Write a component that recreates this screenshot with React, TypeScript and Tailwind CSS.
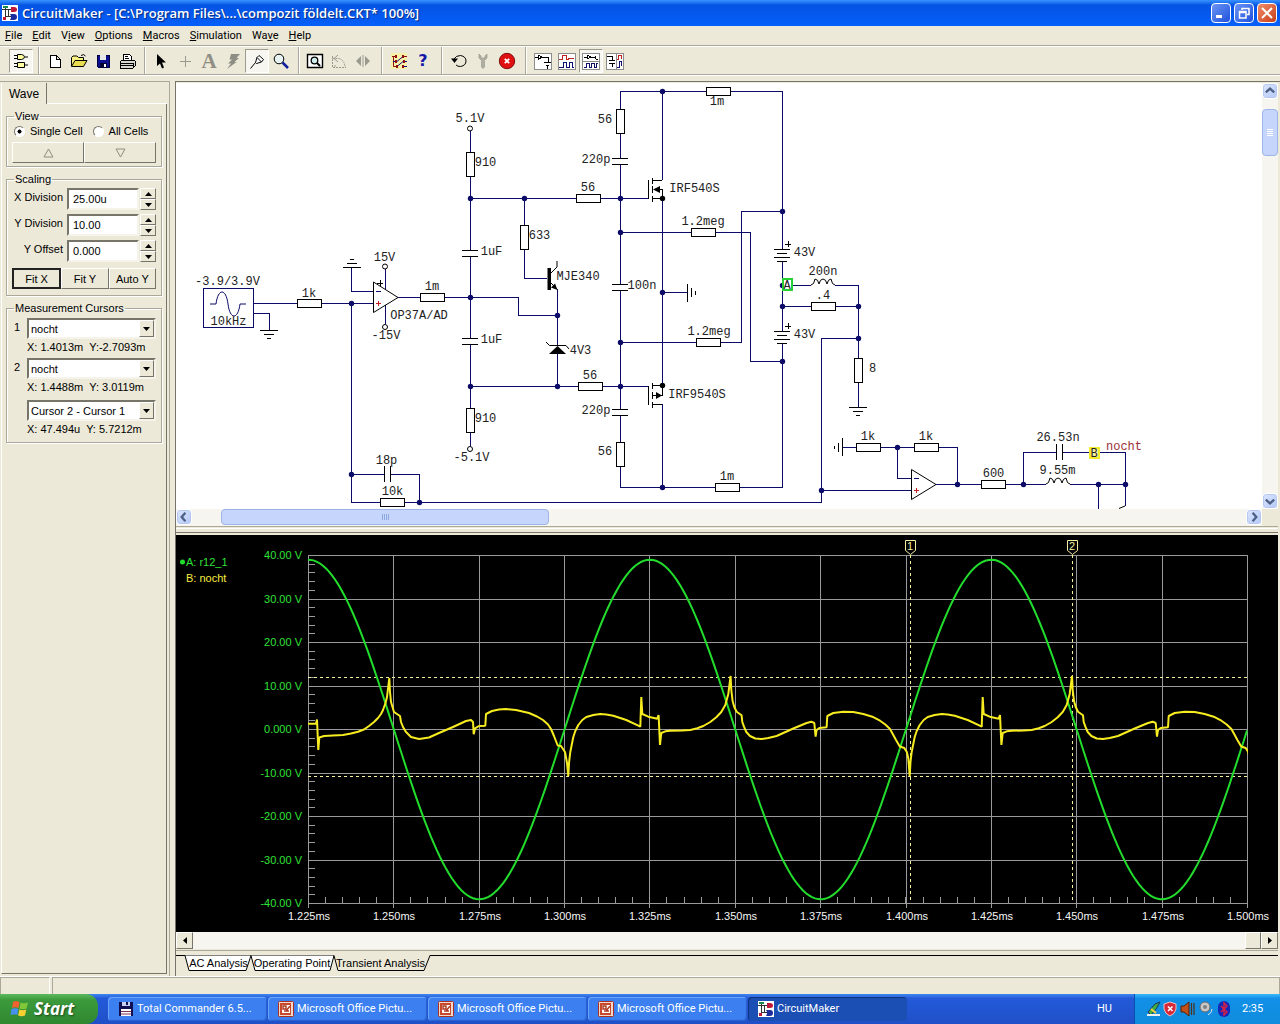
import React from "react";

/* ---------- data ---------- */

const menus: [string, string, string][] = [
  ["", "F", "ile"],
  ["", "E", "dit"],
  ["V", "i", "ew"],
  ["", "O", "ptions"],
  ["", "M", "acros"],
  ["", "S", "imulation"],
  ["Wa", "v", "e"],
  ["", "H", "elp"],
];

const labels: [number, number, string][] = [
  [196, 285, "-3.9/3.9V"], [211, 325, "10kHz"], [302, 297, "1k"], [374, 261, "15V"],
  [372, 339, "-15V"], [391, 319, "OP37A/AD"], [425, 290, "1m"], [456, 122, "5.1V"],
  [475, 166, "910"], [481, 255, "1uF"], [481, 343, "1uF"], [475, 422, "910"],
  [454, 461, "-5.1V"], [376, 464, "18p"], [382, 495, "10k"], [529, 239, "633"],
  [598, 123, "56"], [710, 105, "1m"], [582, 163, "220p"], [581, 191, "56"],
  [670, 192, "IRF540S"], [682, 225, "1.2meg"], [557, 280, "MJE340"], [628, 289, "100n"],
  [794, 256, "43V"], [809, 275, "200n"], [816, 299, ".4"], [688, 335, "1.2meg"],
  [794, 338, "43V"], [570, 354, "4V3"], [583, 379, "56"], [669, 398, "IRF9540S"],
  [582, 414, "220p"], [598, 455, "56"], [720, 480, "1m"], [869, 372, "8"],
  [861, 440, "1k"], [919, 440, "1k"], [983, 477, "600"], [1037, 441, "26.53n"],
  [1040, 474, "9.55m"],
];

const wires = [
  "M470 131V152M470 176V250M470 257V338M470 344V408M470 432V446",
  "M470 198H576M600 198H648M524 198V225M524 249V278H547",
  "M557 289V345M557 353V386M398 297H420M444 297H518V315H557",
  "M373 291H351V267M253 303H297M321 303H373M253 313H269V330",
  "M385 269V289M385 305V324M351 303V502H380M404 502H821V338H858",
  "M351 474H384M390 474H419V502M821 490H911",
  "M620 109V91H706M730 91H782V249M620 133V158M620 164V284M620 290V409M620 415V442M620 466V487H715M739 487H782V343",
  "M662 91V180M662 198V386M662 404V487M662 292H687",
  "M470 386H578M602 386H648M620 232H691M715 232H750V361H782",
  "M620 342H696M720 342H741V211H782M782 262V331",
  "M793 285H811M835 285H858V358M782 306H811M835 306H858M858 382V407",
  "M842 447H856M880 447H914M938 447H957V484M897 447V478H911",
  "M936 484H981M1005 484H1046M1070 484H1125M1023 484V452H1056M1062 452H1089M1100 452H1125V506M1098 484V509",
];

const nodes: [number, number][] = [
  [470, 198], [524, 198], [470, 297], [351, 303], [470, 386], [351, 474], [419, 502],
  [557, 315], [557, 386], [620, 198], [620, 232], [620, 342], [620, 386], [662, 91],
  [662, 292], [662, 487], [782, 211], [782, 285], [782, 306], [782, 361], [858, 306],
  [858, 338], [821, 490], [897, 447], [957, 484], [1023, 484], [1098, 484], [1125, 484],
];

const wideResistors: [number, number][] = [
  [297, 303], [420, 297], [380, 502], [576, 198], [578, 386], [706, 91], [691, 232],
  [696, 342], [715, 487], [811, 306], [856, 447], [914, 447], [981, 484],
];
const tallResistors: [number, number][] = [
  [470, 152], [470, 408], [524, 225], [620, 109], [620, 442], [858, 358],
];
const capacitors: [number, number][] = [[470, 250], [470, 338], [620, 158], [620, 284], [620, 409]];

const wavePeriod = 341.4;

/* The start-up cycle differs a little from the settled ones. */
const firstCycle: [number, number][] = [
  [308, 723.7], [316, 723.7], [317, 719.5], [318.3, 750], [319.3, 737.5], [324, 736], [333, 735.5], [343, 735],
  [351, 733.5], [358, 731.7], [364, 729.5], [369, 726], [374, 722], [378, 718], [381, 714], [383, 710],
  [385.5, 703], [387, 697], [389.3, 678], [390, 692], [391, 702], [394, 712], [400, 716], [401, 722],
  [403, 727], [406, 732], [411, 737], [419, 739], [429, 737.5], [439, 733], [453, 727], [466, 721],
  [471, 720], [473, 722], [473.7, 734.3], [475, 728.3], [479, 726], [485.3, 725.7], [486, 714], [492, 711],
  [499, 709.5], [506, 709], [516, 710], [529, 713], [537, 716.5], [543, 720], [548, 724.5], [551, 729],
  [554, 736], [557.7, 745.5], [561, 746], [565, 752], [567, 763],
];

const cycle: [number, number][] = [
  [0, 776], [0.8, 762], [2, 752], [5, 737], [7, 731], [10, 725], [14, 720], [18, 717], [25, 715], [32, 714],
  [38, 714.6], [45, 715.7], [58, 720], [70, 725.7], [72, 726.7], [73, 697], [74, 714], [80, 716.7], [89, 718.7],
  [90.3, 715], [91.7, 745], [93, 733], [97, 731.3], [102, 730.7], [114, 730.5], [122, 730], [129, 728.3],
  [135, 726], [142, 722], [148, 717.3], [153, 712], [157, 705], [160, 694], [162.3, 676], [163, 690], [164.3, 701],
  [166, 707], [168.3, 711.7], [173.3, 715.3], [174, 722], [175.7, 726.7], [178, 732], [181.7, 736], [187, 738.5],
  [193.3, 739], [200, 738], [208.3, 736], [225, 728.5], [238.3, 723], [243, 721.7], [246, 723], [247.3, 736.7],
  [248.3, 730], [251, 728], [258.3, 727.3], [259, 716], [265, 713], [275, 711.7], [285, 712], [295, 714],
  [304, 716.7], [311.7, 720.7], [317, 724.5], [321.7, 729], [325, 735], [327.7, 740], [331.5, 746.5], [336, 748],
  [338.5, 752], [340, 758.3],
];

function distortionPath() {
  const pts = firstCycle.map(([x, y]) => x + "," + y);
  for (let k = 0; k <= 2; k++)
    for (const [t, y] of cycle) pts.push((568.3 + k * wavePeriod + t).toFixed(1) + "," + y);
  return pts.join(" ");
}

function sinePath() {
  const pts: string[] = [];
  for (let x = 308; x <= 1248; x += 3)
    pts.push(x + "," + (729.5 - 169.8 * Math.cos((2 * Math.PI * (x - 308.5)) / wavePeriod)).toFixed(1));
  return pts.join(" ");
}

const volts = ["40.00 V", "30.00 V", "20.00 V", "10.00 V", "0.000 V", "-10.00 V", "-20.00 V", "-30.00 V", "-40.00 V"];
const times = ["1.225ms", "1.250ms", "1.275ms", "1.300ms", "1.325ms", "1.350ms", "1.375ms", "1.400ms", "1.425ms", "1.450ms", "1.475ms", "1.500ms"];
const colX = (i: number) => Math.round(308 + i * 85.36);
const rowY = (i: number) => Math.round(555 + i * 43.5);

/* ---------- icons ---------- */

function Icon({ children, size = 18, crisp = true }: { children: React.ReactNode; size?: number; crisp?: boolean }) {
  return (
    <svg width={size} height={size} viewBox="0 0 18 18" fill="none" stroke="#000" shapeRendering={crisp ? "crispEdges" : "auto"} aria-hidden="true" className="shrink-0">
      {children}
    </svg>
  );
}

const AppIcon = () => (
  <svg width="16" height="16" viewBox="0 0 16 16" aria-hidden="true" className="shrink-0">
    <rect width="16" height="16" fill="#fff" />
    <path d="M0 4.500H9M3.500 1V12M3.500 11.500H9M6.500 4V11" stroke="#333" fill="none" />
    <path d="M9 2H12Q15 2 15 4.500T12 7H9Z" fill="#c01838" />
    <path d="M8 9H12Q15 9 15 12T12 15H8Q10 12 8 9Z" fill="#1c2c9c" />
    <path d="M1 12H4V15H1Z" fill="#c01838" />
    <path d="M1 1H6V3H1Z" fill="#1a8a50" />
  </svg>
);

const GateIcon = () => (
  <Icon crisp={false}>
    <path d="M5.500 2.500H9.500Q12.500 3 12.500 5T9.500 7.500H5.500ZM2 3.500H5M2 6.500H5M13 5H16" fill="#ffffa0" />
    <path d="M5.500 10.500H12.500V15.500H5.500ZM2 11.500H5M2 14.500H5M13 13H16" fill="#ffffa0" />
  </Icon>
);
const NewIcon = () => <Icon><path d="M4 3H10L14 7V15H4ZM10 3V7H14" fill="#fff" /></Icon>;
const OpenIcon = () => (
  <Icon crisp={false}>
    <path d="M1.500 14V5.500L3 4H7L8.500 5.500H13.500V8" fill="#f8f080" />
    <path d="M1.500 14.500L5 8.500H17L13.500 14.500Z" fill="#e8dc50" />
    <path d="M11 3.500Q14 1.500 15.500 4" />
  </Icon>
);
const SaveIcon = () => (
  <Icon>
    <path d="M3 3H15V15H4L3 14Z" fill="#0c1090" stroke="#000040" />
    <path d="M6 3H12V8H6Z" fill="#e8e8e8" stroke="none" />
    <path d="M6 11H13V15H6Z" fill="#000030" stroke="none" />
    <path d="M10 12H12V15H10Z" fill="#fff" stroke="none" />
  </Icon>
);
const PrintIcon = () => (
  <Icon>
    <path d="M5 8L6 2H11L13 4V8" fill="#fff" />
    <path d="M7 4H10M7 6H11" />
    <path d="M2 10L4 8H15L17 9V14L15 16H2Z" fill="#d8d8d0" />
    <path d="M2 11H15V16M2 13H15" />
  </Icon>
);
const PointerIcon = () => (
  <Icon crisp={false}><path d="M5 2V14L8 11.500L10 16.500L12 15.500L10 10.500H14Z" fill="#000" stroke="none" /></Icon>
);
const PlusIcon = () => <Icon><path d="M9 4V15M4 9H15" stroke="#9a998e" /></Icon>;
const LetterIcon = () => <span className="font-['Liberation_Serif',serif] text-[21px] font-bold leading-5 text-[#8f8e84]">A</span>;
const BoltIcon = () => (
  <Icon crisp={false}><path d="M7 2H16L12.500 6H15L10.500 10H12.500L3 17L7 11.500H4L8 7.500H5.500Z" fill="#8f8e84" stroke="none" /></Icon>
);
const ProbeIcon = () => (
  <Icon crisp={false}><path d="M2.500 16.500L7.500 10.500M7.500 10.500L9 5.500L11 3.500L15.500 7.500L13.500 10L8.500 11.500ZM9 5.500L13.500 10" fill="#fff" /></Icon>
);
const LensIcon = () => (
  <Icon crisp={false}>
    <circle cx="7" cy="7" r="4.800" fill="#e8f4f4" />
    <path d="M10.500 10.500L16 16" stroke="#1020a0" strokeWidth="2.500" />
  </Icon>
);
const PreviewIcon = () => (
  <Icon crisp={false}>
    <path d="M1.500 2.500H16.500V15.500H1.500Z" fill="#fff" strokeWidth="1.400" />
    <circle cx="8.500" cy="8.500" r="3.300" fill="#d0ecec" strokeWidth="1.300" />
    <path d="M11 11L14 14" strokeWidth="2" />
  </Icon>
);
const RotateIcon = () => (
  <Icon crisp={false}>
    <path d="M2.500 4V15.500H16M2.500 6.500H9Q14.500 8 15 15" stroke="#9a998e" strokeDasharray="2 1" />
    <path d="M8 3L4 6.500L8 10M5 13V15" stroke="#9a998e" />
  </Icon>
);
const MirrorIcon = () => (
  <Icon crisp={false}><path d="M9 3V15" stroke="#9a998e" /><path d="M7 4V14L2 9ZM11 4V14L16 9Z" fill="#9a998e" stroke="none" /></Icon>
);
const TraceIcon = () => (
  <Icon crisp={false}>
    <path d="M1 1H17V17H1Z" fill="#f8f0a8" stroke="none" />
    <path d="M2 4.500H6M3.500 4V14.500H7M13 4.500H17" stroke="#901010" />
    <path d="M3 9.500H7L13 4.500M7 14.500L13 9.500H17M13 14.500H17" stroke="#101080" />
    <path d="M5 3H7V6H5ZM12 3H14V6H12ZM5 8H7V11H5ZM13 8H15V11H13ZM6 13H8V16H6ZM12 13H14V16H12Z" fill="#901010" stroke="none" />
  </Icon>
);
const HelpIcon = () => <span className="font-['DejaVu_Sans',sans-serif] text-base font-bold leading-5 text-[#1818a8]">?</span>;
const UndoIcon = () => (
  <Icon crisp={false}><path d="M4 7Q6 3.500 10.500 3.500Q16 4.500 16 9T10.500 14.500Q7.500 14.500 6 13" /><path d="M1 6.500H8L4.500 11Z" fill="#000" stroke="none" /></Icon>
);
const WrenchIcon = () => (
  <Icon crisp={false}><path d="M5 2V6L7.500 8.500V15L9 16.500L10.500 15V8.500L13 6V2L11 4V6H7V4Z" fill="#b0afa4" stroke="#9a998e" strokeWidth="0.700" /></Icon>
);
const StopIcon = () => (
  <Icon crisp={false}>
    <circle cx="9" cy="9" r="7.700" fill="#e01010" stroke="#801010" />
    <path d="M6.800 6.800L11.200 11.200M11.200 6.800L6.800 11.200" stroke="#fff" strokeWidth="1.800" />
  </Icon>
);
const frame = <path d="M0 1H17V17H0Z" fill="#fff" stroke="#8c8c8c" />;
const ViewAIcon = () => (
  <Icon>{frame}<path d="M1 5H4M8 5H14V10M4 3V8L8 5ZM10 10H17M12 13H15M13 13V17" /></Icon>
);
const ViewBIcon = () => (
  <Icon>{frame}<path d="M1 7H4V3H8V7H10V6H16" stroke="#c02020" /><path d="M1 15H5V10H8V15H11V10H14V15H16" stroke="#101070" /></Icon>
);
const ViewCIcon = () => (
  <Icon>{frame}<path d="M0 9H17" stroke="#8c8c8c" /><path d="M2 5H5M5 3V7L9 5ZM9 5H13M13 4V7M14 7H16" /><path d="M2 15H4V11H7V15H9V11H12V15H14V11H16" stroke="#101070" /></Icon>
);
const ViewDIcon = () => (
  <Icon>{frame}<path d="M10 1V17" stroke="#8c8c8c" /><path d="M1 4H6V8M3 8H9M3 11H9M6 11V15" /><path d="M11 7H12V3H15V7" stroke="#c02020" /><path d="M11 15H13V9H15V14" stroke="#101070" /></Icon>
);

const PictureIcon = () => (
  <svg width="16" height="16" viewBox="0 0 16 16" aria-hidden="true" className="shrink-0">
    <rect x="0.500" y="0.500" width="15" height="15" rx="1" fill="#f4d8cc" stroke="#a83020" />
    <rect x="2" y="2" width="11" height="12" fill="#c8482c" />
    <path d="M4 4H12V12H4Z" fill="#fff" />
    <path d="M5 5H8V8H5ZM8 10L12 5M6 10H11" stroke="#b03820" strokeWidth="1.400" fill="none" />
  </svg>
);
const FloppyIcon = () => (
  <svg width="16" height="16" viewBox="0 0 16 16" aria-hidden="true" className="shrink-0">
    <path d="M1 1H15V15H1Z" fill="#101050" />
    <path d="M4 1H12V5H4Z" fill="#c8d0f0" />
    <path d="M8 1H10V4H8Z" fill="#101050" />
    <path d="M3 8H13V15H3Z" fill="#fff" />
    <path d="M3 10.500H13M3 13H13" stroke="#803050" />
  </svg>
);
const FlagIcon = () => (
  <svg width="20" height="20" viewBox="0 0 20 20" aria-hidden="true" className="shrink-0">
    <path d="M3 3Q6 1 9.500 3L8.500 9Q5 7.500 2 9Z" fill="#f06030" />
    <path d="M10.500 3.500Q14 5 18 3.500L16.500 9.500Q13 11 9.500 9.500Z" fill="#80c838" />
    <path d="M1.500 10Q5 8.500 8.300 10L7.300 16Q4 14.500 0.500 16Z" fill="#4890f0" />
    <path d="M9.300 10.500Q13 12 16.300 10.500L15 16.500Q11.500 18 8.200 16.500Z" fill="#f8d030" />
  </svg>
);

const TrayIcons = () => (
  <svg width="88" height="18" viewBox="0 0 88 18" aria-hidden="true" className="shrink-0">
    <path d="M2 12L9 4L14 2L10 9L5 15Z" fill="#40b040" stroke="#203060" />
    <path d="M1 15H14" stroke="#f0f0f0" strokeWidth="2" />
    <path d="M5 9L10 13" stroke="#f0d040" strokeWidth="2" />
    <path d="M24 2L30 4V9Q29 14 24 16Q19 14 18 9V4Z" fill="#d82838" stroke="#f0c0c0" />
    <path d="M22 6.500L26.500 11M26.500 6.500L22 11" stroke="#fff" strokeWidth="1.600" />
    <path d="M35 6H38L43 2V16L38 12H35Z" fill="#c05018" stroke="#502008" />
    <path d="M45.500 3V15M48 3V15" stroke="#503018" strokeWidth="1.200" />
    <circle cx="59" cy="7" r="5" fill="#c8c8c8" stroke="#686868" />
    <circle cx="59" cy="7" r="2" fill="#808080" />
    <path d="M62 15Q66 13 66 9" stroke="#e0e0e0" fill="none" />
    <rect x="72" y="1" width="12" height="16" rx="6" fill="#1428b8" />
    <path d="M75 6L81 12L78 15V3L81 6L75 12" stroke="#e02040" fill="none" strokeWidth="1.400" />
  </svg>
);

/* ---------- small controls ---------- */

const raised = "border border-white border-r-[#77756a] border-b-[#77756a] bg-[#ece9d8]";
const sunken = "border-2 border-[#77756a] border-r-[#f6f4ea] border-b-[#f6f4ea] bg-white";

function Tool({ label, pressed, children }: { label: string; pressed?: boolean; children: React.ReactNode }) {
  return (
    <button
      type="button"
      aria-label={label}
      className={
        "flex h-6 w-6 items-center justify-center " +
        (pressed ? "border border-[#9d9b8f] border-r-white border-b-white bg-[#f7f6f0]" : "")
      }
    >
      {children}
    </button>
  );
}

const Separator = ({ wide }: { wide?: boolean }) => (
  <span className={"flex h-full justify-center " + (wide ? "w-3" : "w-2.5")}>
    <span className="w-px bg-[#aca899] shadow-[1px_0_0_#fff]" />
  </span>
);

function Spinner({ name }: { name: string }) {
  return (
    <span className="flex w-4 flex-col">
      {["increase", "decrease"].map((d) => (
        <button key={d} type="button" aria-label={name + " " + d} className={"flex flex-1 items-center justify-center " + raised}>
          <svg width="7" height="4" viewBox="0 0 7 4" aria-hidden="true">
            <path d={d === "increase" ? "M0 4H7L3.500 0Z" : "M0 0H7L3.500 4Z"} />
          </svg>
        </button>
      ))}
    </span>
  );
}

function Division({ id, label, value }: { id: string; label: string; value: string }) {
  return (
    <div className="flex h-[22px] items-stretch justify-end">
      <label htmlFor={id} className="whitespace-nowrap pr-1 pt-px">{label}</label>
      <input id={id} defaultValue={value} className={"w-[72px] px-1 outline-none " + sunken} />
      <span className="w-px" />
      <Spinner name={label} />
    </div>
  );
}

function Choice({ id, label, value, number }: { id: string; label: string; value: string; number?: string }) {
  return (
    <div className="flex h-[21px]">
      {number ? <label htmlFor={id} className="w-[13px] pt-px">{number}</label> : <span className="w-[13px]" />}
      <div className={"relative flex-1 " + sunken}>
        <select id={id} aria-label={label} defaultValue={value} className="h-full w-full appearance-none bg-white pl-0.5 pr-4 outline-none">
          <option>{value}</option>
        </select>
        <span className={"pointer-events-none absolute inset-y-0 right-0 flex w-[15px] items-center justify-center " + raised}>
          <svg width="7" height="4" viewBox="0 0 7 4" aria-hidden="true"><path d="M0 0H7L3.500 4Z" /></svg>
        </span>
      </div>
    </div>
  );
}

const group = "mx-1 min-w-0 border border-[#aca899] shadow-[1px_1px_0_#fff,inset_1px_1px_0_#fff]";
const arrowPaths: Record<string, string> = {
  up: "M3 9L7.500 5L12 9",
  down: "M3 6L7.500 10L12 6",
  left: "M9 3L5 7.500L9 12",
  right: "M6 3L10 7.500L6 12",
};

function ScrollArrow({ dir }: { dir: string }) {
  return (
    <button type="button" aria-label={"Scroll " + dir} className="flex h-4 w-4 shrink-0 items-center justify-center rounded-sm border border-white bg-linear-to-br from-[#dce6fe] to-[#b4c8f6] shadow-[inset_0_0_0_1px_#b6c8f0]">
      <svg width="14" height="14" viewBox="0 0 15 15" fill="none" stroke="#4d6185" strokeWidth="2.500" aria-hidden="true"><path d={arrowPaths[dir]} /></svg>
    </button>
  );
}

/* ---------- schematic ---------- */

function Schematic() {
  return (
    <svg width="1086" height="426" viewBox="176 83 1086 426" className="block max-w-none shrink-0" role="img" aria-label="Circuit schematic">
      <g fill="none" stroke="#0c0c68" shapeRendering="crispEdges">
        {wires.map((d) => <path key={d} d={d} />)}
        <rect x="203" y="288" width="50" height="39" />
      </g>
      <g fill="none" stroke="#0c0c68">
        <path d="M210 304H216C218 288 226 288 228 304S238 320 240 304H246" />
      </g>
      <g fill="#0c0c68">
        {nodes.map(([x, y]) => <circle key={x + "-" + y} cx={x + 0.5} cy={y + 0.5} r="2.700" />)}
      </g>
      <g fill="#fff" stroke="#000" shapeRendering="crispEdges">
        {wideResistors.map(([x, y]) => <rect key={x + "-" + y} x={x} y={y - 4} width="24" height="8" />)}
        {tallResistors.map(([x, y]) => <rect key={x + "-" + y} x={x - 4} y={y} width="8" height="24" />)}
        {capacitors.map(([x, y]) => <path key={x + "-" + y} d={`M${x - 8} ${y}H${x + 8}M${x - 8} ${y + 6}H${x + 8}`} />)}
        <path d="M384 466V482M390 466V482M1056 444V460M1062 444V460" />
        <path d="M343 267H361M347 263H357M350 259H354M260 330H278M264 334H274M267 338H271M849 407H867M853 411H863M856 415H860" />
        <path d="M687 284V302M691 288V297M695 291V295M842 438V456M838 443V452M834 446V449" />
        <path d="M774 249H790M777 253H787M774 257H790M777 261H787M774 331H790M777 335H787M774 339H790M777 343H787" />
        <path d="M788 241V247M785 244H791M788 323V329M785 326H791M380 280V286M377 283H383" />
        <path d="M648 180V199M652 178V184M652 186V193M652 196V202M652 180H662M652 198H662M660 189H662V198" />
        <path d="M648 386V405M652 383V389M652 392V399M652 402V408M652 385H662V395H652M652 404H662" />
      </g>
      <g fill="none" stroke="#000">
        <path d="M373.500 282V312.500L398 297.500ZM911.500 469.500V499.500L936 484.500Z" />
        <circle cx="470" cy="128.500" r="2.500" /><circle cx="470" cy="449" r="2.500" />
        <circle cx="385" cy="266.500" r="2.500" /><circle cx="385" cy="327" r="2.500" />
        <path d="M551 273L557 267V261M551 283L557 289M546 342L549.500 345.500H566L569 349M1125 506L1119 508.500" />
        <path d="M811 285Q814 285 815 279Q818 279 819 284Q820 279 823 279Q826 279 827 284Q828 279 831 279Q832 285 835 285" />
        <path d="M1046 484Q1049 484 1050 478Q1053 478 1054 483Q1055 478 1058 478Q1061 478 1062 483Q1063 478 1066 478Q1067 484 1070 484" />
      </g>
      <g fill="#000">
        <path d="M547.500 268H551V290H547.500ZM557.500 290L551 287.500L555 283.500ZM557.500 346L566 354H549ZM653 189.500L660 186V193ZM662 395.500L656 392V399Z" />
        <circle cx="662.500" cy="198.500" r="2.700" /><circle cx="662.500" cy="385.500" r="2.700" />
      </g>
      <g shapeRendering="crispEdges">
        <path d="M376 291H381M914 478H919" stroke="#0c0c68" />
        <path d="M376 303H381M378 301V306M914 490H919M916 488V493" stroke="#c02020" />
        <rect x="783" y="279" width="9" height="11" fill="#fff" stroke="#28d038" strokeWidth="2" />
        <rect x="1090" y="448" width="9" height="10" fill="#f8f4a0" stroke="#f4ec28" strokeWidth="2" />
      </g>
      <g className="font-['Liberation_Mono',monospace] text-[12px]" fill="#222" textAnchor="middle">
        {labels.map(([x, y, t]) => <text key={x + "-" + y} x={x + t.length * 3.5} y={y}>{t}</text>)}
        <text x="787" y="289">A</text>
        <text x="1094" y="457">B</text>
        <text x="1124" y="450" fill="#9c3038">nocht</text>
      </g>
    </svg>
  );
}

/* ---------- wave display ---------- */

function WaveChart() {
  const steps = Array.from({ length: 41 }, (_, i) => i);
  const minor = Array.from({ length: 56 }, (_, i) => i);
  return (
    <svg width="1102" height="397" viewBox="176 535 1102 397" className="block max-w-none shrink-0" role="img" aria-label="Transient analysis waveforms">
      <defs><clipPath id="plot"><rect x="308" y="550" width="940" height="360" /></clipPath></defs>
      <g stroke="#9a9a9a" shapeRendering="crispEdges" fill="none">
        {volts.map((v, i) => <path key={v} d={`M308 ${rowY(i)}H1248`} />)}
        {times.map((v, i) => <path key={v} d={`M${colX(i)} 555V908`} />)}
        {steps.map((i) => <path key={i} d={`M308 ${Math.round(555 + i * 8.7)}H315`} />)}
        {minor.map((i) => <path key={i} d={`M${Math.round(308 + i * 17.07)} 897V903`} />)}
      </g>
      <g stroke="#f4f0a0" strokeDasharray="3 3" shapeRendering="crispEdges">
        <path d="M308 677H1248M308 776H1248M910 555V903M1072 555V903" />
      </g>
      <g fill="none" strokeWidth="2" clipPath="url(#plot)">
        <polyline points={sinePath()} stroke="#22dd2c" />
        <polyline points={distortionPath()} stroke="#f6ec20" strokeLinejoin="bevel" />
      </g>
      <g fill="none" stroke="#f4f0a0">
        <path d="M905.500 540.500H915.500V550.500L910.500 554.500L905.500 550.500ZM1067.500 540.500H1077.500V550.500L1072.500 554.500L1067.500 550.500Z" />
      </g>
      <circle cx="182.500" cy="562" r="2.500" fill="#22dd2c" />
      <g className="font-['Liberation_Sans',sans-serif] text-[11px]">
        <text x="186" y="566" fill="#30e038">A: r12_1</text>
        <text x="186" y="582" fill="#f6ec40">B: nocht</text>
        <g fill="#30e038" textAnchor="end">
          {volts.map((v, i) => <text key={v} x="302" y={rowY(i) + 4}>{v}</text>)}
        </g>
        <g fill="#f4f4f4" textAnchor="middle">
          {times.map((v, i) => <text key={v} x={colX(i) + 1} y="920">{v}</text>)}
        </g>
        <g fill="#f4f0a0" textAnchor="middle">
          <text x="910" y="550">1</text>
          <text x="1072" y="550">2</text>
        </g>
      </g>
    </svg>
  );
}

/* ---------- page ---------- */

const titleButton = "flex h-5 w-5 items-center justify-center rounded border border-white";

export default function App() {
  return (
    <div className="flex min-h-screen flex-col bg-[#ece9d8] font-['Liberation_Sans',Arial,sans-serif] text-[11px] leading-4 text-black">
      <header className="flex h-[26px] items-center bg-linear-to-b from-[#3a93ff] via-[#0453e4] via-20% to-[#0560fb] pl-0.5 pr-[3px] text-white">
        <AppIcon />
        <h1 className="flex-1 pl-1 font-['Open_Sans',sans-serif] text-[13px] font-semibold [text-shadow:1px_1px_1px_#0a2a80]">
          CircuitMaker - [C:\Program Files\...\compozit földelt.CKT* 100%]
        </h1>
        <div className="flex gap-[3px]">
          <button type="button" aria-label="Minimize" className={titleButton + " bg-linear-to-br from-[#6d94f4] to-[#1e4fdc]"}>
            <svg width="14" height="14" viewBox="0 0 14 14" aria-hidden="true"><path d="M2 9H8V12H2Z" fill="#fff" /></svg>
          </button>
          <button type="button" aria-label="Restore" className={titleButton + " bg-linear-to-br from-[#6d94f4] to-[#1e4fdc]"}>
            <svg width="14" height="14" viewBox="0 0 14 14" fill="none" stroke="#fff" strokeWidth="1.500" aria-hidden="true"><path d="M5 4V2.500H12V8.500H10M2.500 5.500H9V12H2.500ZM2 6.500H9" /></svg>
          </button>
          <button type="button" aria-label="Close" className={titleButton + " bg-linear-to-br from-[#f08c68] to-[#c83c14]"}>
            <svg width="14" height="14" viewBox="0 0 14 14" stroke="#fff" strokeWidth="2" aria-hidden="true"><path d="M2 2L12 12M12 2L2 12" /></svg>
          </button>
        </div>
      </header>

      <nav className="flex h-5 items-center gap-2.5 border-b border-[#aca899] pl-[5px] font-['Roboto',sans-serif]">
        {menus.map(([a, u, b]) => (
          <button type="button" key={a + u + b}>{a}<span className="underline">{u}</span>{b}</button>
        ))}
      </nav>

      <div className="flex h-[29px] items-center border-b border-t border-b-[#aca899] border-t-white pl-[9px]">
        <Tool label="Parts" pressed><GateIcon /></Tool>
        <Separator />
        <Tool label="New"><NewIcon /></Tool>
        <Tool label="Open"><OpenIcon /></Tool>
        <Tool label="Save"><SaveIcon /></Tool>
        <Tool label="Print"><PrintIcon /></Tool>
        <Separator />
        <Tool label="Arrow tool"><PointerIcon /></Tool>
        <Tool label="Wire tool"><PlusIcon /></Tool>
        <Tool label="Text tool"><LetterIcon /></Tool>
        <Tool label="Delete tool"><BoltIcon /></Tool>
        <Tool label="Probe tool" pressed><ProbeIcon /></Tool>
        <Tool label="Zoom tool"><LensIcon /></Tool>
        <Separator />
        <Tool label="Fit to window"><PreviewIcon /></Tool>
        <Tool label="Rotate"><RotateIcon /></Tool>
        <Tool label="Mirror"><MirrorIcon /></Tool>
        <Separator wide />
        <Tool label="Trace"><TraceIcon /></Tool>
        <Tool label="Help"><HelpIcon /></Tool>
        <Separator wide />
        <Tool label="Reset"><UndoIcon /></Tool>
        <Tool label="Step"><WrenchIcon /></Tool>
        <Tool label="Stop simulation"><StopIcon /></Tool>
        <Separator wide />
        <Tool label="Show schematic"><ViewAIcon /></Tool>
        <Tool label="Show waveforms"><ViewBIcon /></Tool>
        <Tool label="Split horizontally" pressed><ViewCIcon /></Tool>
        <Tool label="Split vertically"><ViewDIcon /></Tool>
      </div>

      <main className="flex flex-1 border-t border-white pt-[5px]">
        <aside className="flex w-[170px] shrink-0 flex-col border-r border-t border-[#aca899] pb-0.5 pl-px pr-0.5 pt-px">
          <div className="flex h-[21px]">
            <button type="button" className="w-[46px] border-l border-r border-l-white border-r-[#77756a] text-[12px]">Wave</button>
            <span className="flex-1 border-b border-white" />
          </div>
          <div className="flex-1 border-b border-l border-r border-[#77756a] border-l-white">
            <fieldset className={"mt-1 h-[59px] px-[5px] " + group}>
              <legend className="ml-0.5 px-px">View</legend>
              <div className="-mt-px flex gap-2">
                {["Single Cell", "All Cells"].map((t, i) => (
                  <label key={t} className="flex items-center gap-[5px] pl-0.5">
                    <input type="radio" name="cells" defaultChecked={i === 0} className="h-[11px] w-[11px] appearance-none rounded-full border border-[#77756a] border-b-white border-r-white bg-white checked:bg-[radial-gradient(#000_28%,#fff_36%)]" />
                    {t}
                  </label>
                ))}
              </div>
              <div className="mt-[3px] flex h-[21px]">
                <button type="button" aria-label="Previous cell" className={"flex flex-1 items-center justify-center " + raised}>
                  <svg width="11" height="10" viewBox="0 0 11 10" fill="none" stroke="#8f8d80" aria-hidden="true"><path d="M1 9H10L5.500 1Z" /></svg>
                </button>
                <button type="button" aria-label="Next cell" className={"flex flex-1 items-center justify-center " + raised}>
                  <svg width="11" height="10" viewBox="0 0 11 10" fill="none" stroke="#8f8d80" aria-hidden="true"><path d="M1 1H10L5.500 9Z" /></svg>
                </button>
              </div>
            </fieldset>

            <fieldset className={"mt-1 h-[125px] px-[5px] " + group}>
              <legend className="ml-0.5 px-px">Scaling</legend>
              <div className="mt-px flex flex-col gap-1">
                <Division id="xdiv" label="X Division" value="25.00u" />
                <Division id="ydiv" label="Y Division" value="10.00" />
                <Division id="yoff" label="Y Offset" value="0.000" />
              </div>
              <div className="mt-1.5 flex h-[21px]">
                <button type="button" className="flex-1 border-2 border-[#222] bg-[#ece9d8]">Fit X</button>
                <button type="button" className={"flex-1 " + raised}>Fit Y</button>
                <button type="button" className={"flex-1 " + raised}>Auto Y</button>
              </div>
            </fieldset>

            <fieldset className={"mt-1 h-[143px] px-[5px] " + group}>
              <legend className="ml-0.5 px-px">Measurement Cursors</legend>
              <div className="mt-0.5 flex flex-col pl-0.5">
                <Choice id="c1" label="Cursor 1" number="1" value="nocht" />
                <p className="whitespace-pre pb-[3px] pl-[13px]">X: 1.4013m  Y:-2.7093m</p>
                <Choice id="c2" label="Cursor 2" number="2" value="nocht" />
                <p className="whitespace-pre pb-[5px] pl-[13px]">X: 1.4488m  Y: 3.0119m</p>
                <Choice id="cd" label="Difference" value="Cursor 2 - Cursor 1" />
                <p className="whitespace-pre pl-[13px]">X: 47.494u  Y: 5.7212m</p>
              </div>
            </fieldset>
          </div>
        </aside>

        <div className="ml-[5px] flex min-w-0 flex-1 flex-col border-l border-t border-[#77756a] pr-0.5 pt-px">
          <section className="flex min-h-[443px] flex-1">
            <div className="flex min-w-0 flex-1 flex-col">
              <div className="flex-1 overflow-hidden bg-white"><Schematic /></div>
              <div className="flex h-[17px] bg-[#f6f5ef]">
                <ScrollArrow dir="left" />
                <div className="flex flex-1 pl-[29px]">
                  <div className="flex h-4 w-[32%] items-center justify-center gap-px rounded-sm border border-[#9db4e8] bg-[#c6d5fb]">
                    {[0, 1, 2, 3].map((i) => <span key={i} className="h-1.5 w-px bg-[#8ea8e0]" />)}
                  </div>
                </div>
                <ScrollArrow dir="right" />
              </div>
            </div>
            <div className="flex w-4 flex-col bg-[#f6f5ef]">
              <ScrollArrow dir="up" />
              <div className="flex-1 pt-2.5">
                <div className="flex h-[47px] flex-col items-center justify-center gap-px rounded-sm border border-[#9db4e8] bg-[#c6d5fb]">
                  {[0, 1, 2, 3].map((i) => <span key={i} className="h-px w-1.5 bg-white" />)}
                </div>
              </div>
              <ScrollArrow dir="down" />
              <span className="h-[17px] bg-[#ece9d8]" />
            </div>
          </section>
          <div className="h-[9px] border-t border-[#aca899] pt-px"><div className="h-[5px] border-b border-t border-b-[#77756a] border-t-white" /></div>
          <section className="overflow-hidden bg-black"><WaveChart /></section>
          <div className="flex h-[17px] bg-[#f6f5ef]">
            <button type="button" aria-label="Scroll waves left" className={"flex w-[17px] items-center justify-center " + raised}>
              <svg width="4" height="7" viewBox="0 0 4 7" aria-hidden="true"><path d="M4 0V7L0 3.500Z" /></svg>
            </button>
            <span className="flex-1" />
            <span className={"w-4 " + raised} />
            <button type="button" aria-label="Scroll waves right" className={"flex w-[17px] items-center justify-center " + raised}>
              <svg width="4" height="7" viewBox="0 0 4 7" aria-hidden="true"><path d="M0 0V7L4 3.500Z" /></svg>
            </button>
          </div>
          <div className="mt-px flex h-[26px] flex-col border-t border-[#aca899] pt-1">
            <div className="relative flex border-t border-black pl-2.5">
              <svg width="256" height="17" viewBox="0 0 256 17" className="absolute -top-px left-2" fill="#fff" stroke="#000" aria-hidden="true">
                <path d="M1 0.500L5 15.500H62L67 0.500" />
                <path d="M67 0.500L71 15.500H146L150 0.500" />
                <path d="M150 0.500L154 15.500H240L246 0.500" fill="#ece9d8" />
                <path d="M150.500 0.500H245.500" stroke="#ece9d8" />
              </svg>
              <button type="button" className="relative w-[65px] text-center leading-[15px]">AC Analysis</button>
              <button type="button" className="relative w-[82px] whitespace-nowrap text-center leading-[15px]">Operating Point</button>
              <button type="button" className="relative w-[95px] whitespace-nowrap text-center leading-[15px]">Transient Analysis</button>
            </div>
          </div>
        </div>
      </main>

      <footer className="flex h-[18px] gap-0.5 border-t border-white">
        <span className="w-[50px] border border-[#aca899] border-b-0 border-r-white" />
        <span className="flex-1 border border-b-0 border-[#aca899]" />
      </footer>

      <div className="flex h-[30px] items-stretch bg-linear-to-b from-[#3f86f0] via-[#2359d8] via-15% to-[#1f50c8] font-['Roboto',sans-serif] text-white">
        <button type="button" className="flex w-[98px] items-center gap-1 rounded-r-xl bg-linear-to-b from-[#5cb85c] via-[#3c9a3c] via-20% to-[#2f882f] pl-2.5 font-['Open_Sans',sans-serif] text-[17px] font-bold italic [text-shadow:1px_1px_2px_#1c4a1c]">
          <FlagIcon />Start
        </button>
        <div className="flex flex-1 gap-px py-[3px] pl-2.5">
          {["Total Commander 6.5...", "Microsoft Office Pictu...", "Microsoft Office Pictu...", "Microsoft Office Pictu...", "CircuitMaker"].map((t, i) => (
            <button
              type="button"
              key={i}
              className={
                "flex w-[159px] items-center gap-[3px] rounded-sm pl-2.5 " +
                (i === 4 ? "bg-[#1c4fb4] shadow-[inset_1px_1px_1px_#10327c]" : "bg-[#3b7ff0] shadow-[inset_1px_1px_0_#6aa4fa,inset_-1px_-1px_1px_#2a5fcc]")
              }
            >
              {i === 0 ? <FloppyIcon /> : i === 4 ? <AppIcon /> : <PictureIcon />}
              {t}
            </button>
          ))}
        </div>
        <span className="flex w-[37px] items-center">HU</span>
        <div className="flex w-[146px] items-center gap-2 border-l border-[#0a4fb0] bg-linear-to-b from-[#38b8f8] via-[#1290e8] via-15% to-[#0f8cdc] pl-[11px]">
          <TrayIcons />
          <span>2:35</span>
        </div>
      </div>
    </div>
  );
}
